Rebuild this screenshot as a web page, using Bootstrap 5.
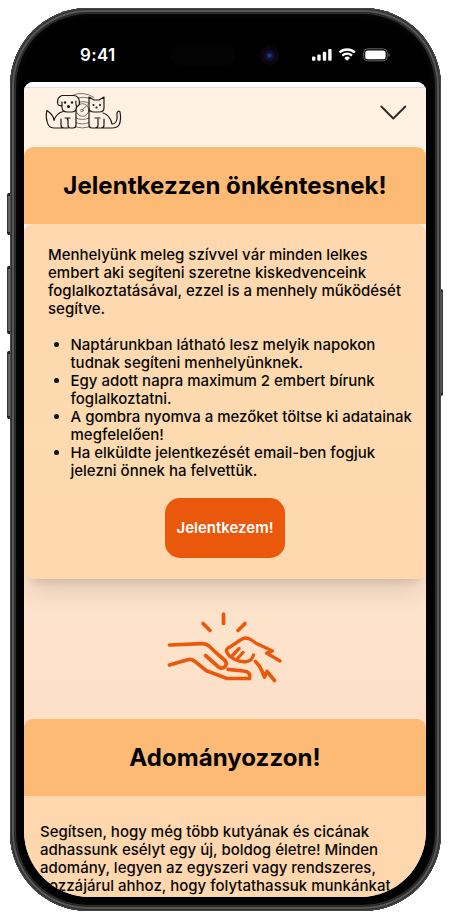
<!DOCTYPE html>
<html lang="hu">
<head>
<meta charset="utf-8">
<meta name="viewport" content="width=device-width, initial-scale=1">
<title>Menhely</title>
<link href="https://cdn.jsdelivr.net/npm/bootstrap@5.3.0/dist/css/bootstrap.min.css" rel="stylesheet">
<style>
body{width:450px;height:920px;overflow:hidden;background:#fff;font-family:Inter,sans-serif;color:#080808}
.stage{width:450px;height:920px;padding:8px 9px 9px 10px}
.phone{width:431px;height:903px;border-radius:78px;background:#000;padding:0 14px 14px;
 box-shadow:inset 0 0 0 1px #4a4a4a,inset 0 0 0 2px #2c2c2c,inset 0 0 0 4px #575757,inset 0 0 0 5px #262626,inset 0 0 0 6px #303030,inset 0 0 7px 6px #101010}
.status{height:74px;padding:20px 36px 0 56px;color:#fff}
.clock{width:90px;font-size:17px;font-weight:600;line-height:54px;margin-top:-1px;letter-spacing:.3px}
.island{width:66px;height:22px;background:#030303}
.lens{width:19px;height:19px;margin-left:auto;margin-right:33px;background:radial-gradient(circle,#293780 0 1px,#10133d 3px,#0c0d25 5px,#08070b 6px,#0b080b 9px)}
.screen{width:402px;height:815px;border-radius:9px 9px 66px 66px;background:linear-gradient(#fff3e5 0,#ffe6ce 55%,#fddfc8 80%)}
.topline{height:5px;background:#fff}
.site-nav{height:60px;border-top:1px solid #dedee0;background:#fff2e2;padding:0 19px 0 21px}
.pets{margin-top:5px}
.chevron{margin-top:16px}
.banner{height:77px;background:#fdba74;border-radius:9px 9px 0 0;font-size:24px;font-weight:700;letter-spacing:.06px;padding-top:2px;color:#000}
.under-half{background:linear-gradient(#feeedb 0 50%,transparent 50%)}
.panel{height:355px;border-radius:9px;background:linear-gradient(#fed7ae,#fddaaf 60%,#fed7ae);padding:22px 0 0 24px;box-shadow:0 20px 25px -5px rgba(0,0,0,.1),0 8px 10px -6px rgba(0,0,0,.12)}
.copy{font-size:15px;line-height:18px;font-weight:500;white-space:nowrap;color:#080808}
.copy ul{padding-left:22.5px;margin-top:18px}
.action{padding-right:24px;margin-top:18px}
.apply{width:120px;height:60px;border-radius:15px;background:#ea580c;color:#fff;font-size:15px;font-weight:600;white-space:nowrap}
.apply:hover{background:#d94e08;color:#fff}
.gap-art{height:140px;padding-top:26px}
.panel-low{height:101px;background:#fed7ae;padding:27px 0 0 16px}
.side-key{width:4px;background:linear-gradient(90deg,#222,#777 55%,#333);border-top:3px solid #222;border-bottom:3px solid #222;border-radius:2px 0 0 2px}
.k1{left:7px;top:193px;height:42px}.k2{left:7px;top:266px;height:68px}.k3{left:7px;top:351px;height:68px}.k4{left:439px;top:289px;height:107px;transform:scaleX(-1)}
</style>
<script src="https://cdn.jsdelivr.net/npm/bootstrap@5.3.0/dist/js/bootstrap.bundle.min.js"></script>
</head>
<body>
<div class="stage position-relative">
 <div class="side-key k1 position-absolute"></div><div class="side-key k2 position-absolute"></div><div class="side-key k3 position-absolute"></div><div class="side-key k4 position-absolute"></div>
 <div class="phone position-relative">
  <div class="status d-flex align-items-center">
   <div class="clock">9:41</div>
   <div class="island rounded-pill"></div>
   <div class="lens rounded-circle"></div>
   <svg width="79" height="16" viewBox="0 0 79 16" fill="#fff" class="flex-shrink-0">
    <rect x="0" y="9.5" width="3.4" height="4.2" rx="1"/><rect x="5.3" y="7.5" width="3.4" height="6.2" rx="1"/><rect x="10.8" y="4.8" width="3.4" height="8.9" rx="1"/><rect x="16.2" y="2" width="3.4" height="11.7" rx="1"/>
    <path d="M27.5 5.5a11.2 11.2 0 0 1 15.300 0M30.300 8.600a7 7 0 0 1 9.700 0" fill="none" stroke="#fff" stroke-width="2.300"/><path d="M32.300 10.900a4.100 4.100 0 0 1 5.700 0l-2.850 2.900z"/>
    <rect x="51.600" y="1.800" width="23.600" height="12" rx="4" fill="none" stroke="#686868"/><rect x="53.200" y="3.400" width="20.400" height="8.800" rx="2.500"/><path d="M76.500 6v4q1.200-.5 1.200-2t-1.200-2" fill="#777"/>
   </svg>
  </div>
  <main class="screen overflow-hidden">
   <div class="topline"></div>
   <nav class="site-nav d-flex justify-content-between align-items-start">
    <svg class="pets" width="78" height="38" viewBox="0 0 78 38" fill="none" stroke="#1d1b18" stroke-width="1.200" stroke-linecap="round" stroke-linejoin="round">
     <g stroke="#77736d" stroke-width="1"><path d="M27 2.500Q38-2.500 49 4.500M33 5q5-1.500 11 0"/><circle cx="37.500" cy="17" r="6.300"/><circle cx="37" cy="17.500" r="1.300"/><path d="m38 16.300 5-4.800M34 9q5-1.500 10 1M31 25q6 3 13 0M31 29.500q6 3 13 0M31 34q6 2 13 0"/></g>
     <path d="M17 2.500h12Q34 3 34.500 9q0 4-2.500 4.500Q30.500 13 31 8M17 2.500Q12.500 4 12.500 9q0 4.500 4 3.500M17 9v5q0 5 5 5h5q5 0 4.500-7M31 18v14q0 3-3 3h-3q-2 0-2-3v-6M16 26v6q0 3 3 3h4M20 25h5M22.500 25v2M18 18.500q-7 2-9 9 0-5-7-10Q.5 23 2 28q1 7 7 7h10"/>
     <path d="M44 18V4l5 3h5l5-3v11q0 4-5 4h-5q-5 0-5-4M44 18v14q0 3 3 3h3q3 0 3-3v-6M59 26v6q0 3-3 3h-5M50 25h5M58 20q7 2 9 11 4 0 5-5V20q1-3 3-1 1.500 8-1 13-2 3-7 3H56"/>
     <g fill="#1d1b18" stroke="none"><circle cx="20" cy="9.500" r="1.200"/><circle cx="27" cy="9.500" r="1.200"/><circle cx="23.500" cy="13.500" r="1.500"/><circle cx="48.500" cy="12" r="1.100"/><circle cx="55" cy="12" r="1.100"/><circle cx="51.500" cy="14.500" r="1.100"/></g>
    </svg>
    <svg class="chevron" width="28" height="18" viewBox="0 0 28 18" fill="none" stroke="#2b2a28" stroke-width="1.900" stroke-linecap="round" stroke-linejoin="round"><path d="m2.300 2.500 12 12 12-12"/></svg>
   </nav>
   <section>
    <h2 class="banner d-flex align-items-center justify-content-center mb-0">Jelentkezzen önkéntesnek!</h2>
    <div class="under-half"><div class="panel copy">
      <p class="mb-0">Menhelyünk meleg szívvel vár minden lelkes<br>embert aki segíteni szeretne kiskedvenceink<br>foglalkoztatásával, ezzel is a menhely működését<br>segítve.</p>
      <ul class="mb-0">
       <li>Naptárunkban látható lesz melyik napokon<br>tudnak segíteni menhelyünknek.</li>
       <li>Egy adott napra maximum 2 embert bírunk<br>foglalkoztatni.</li>
       <li>A gombra nyomva a mezőket töltse ki adatainak<br>megfelelően!</li>
       <li>Ha elküldte jelentkezését email-ben fogjuk<br>jelezni önnek ha felvettük.</li>
      </ul>
      <div class="action d-flex justify-content-center"><button type="button" class="btn apply p-0 border-0">Jelentkezem!</button></div>
    </div></div>
   </section>
   <div class="gap-art d-flex justify-content-center">
    <svg width="130" height="90" viewBox="160 605 130 90" fill="none" stroke="#ea580c" stroke-width="3.700" stroke-linecap="round" stroke-linejoin="round">
     <path d="M223.500 614v9.500M203 623.500l7 7M245 623.500l-7 7M169.500 645l32.500-1.300q4-.2 7 2.300l9 8.500 6 5q4 3.500 1 7-3 3-6.500.5L205.500 655.500M169.500 665l18-5.300q4-1 7 1.500l12 9.600 20.500 7.700H249.500Q251 671.500 243.500 671L228 669.300"/>
     <path stroke-width="3.300" d="M280 661l-13.500-8 6-2-16-7.500-5-3.500q-6-4-11 0L227.500 648.500q-2 1.500-.5 4l2.500 3.500 5.500 3.500q6 3 12 2 5-1 6.500-6.500M239 648.500l-7 7.500M243 652.500l-6 6.500"/>
     <path d="M255.500 661.500q4 4 6 8.500l3 7 2.500-5.500 7.500 9"/>
    </svg>
   </div>
   <section>
    <h2 class="banner d-flex align-items-center justify-content-center mb-0">Adományozzon!</h2>
    <div class="panel-low copy">Segítsen, hogy még több kutyának és cicának<br>adhassunk esélyt egy új, boldog életre! Minden<br>adomány, legyen az egyszeri vagy rendszeres,<br>hozzájárul ahhoz, hogy folytathassuk munkánkat.</div>
   </section>
  </main>
 </div>
</div>
</body>
</html>
